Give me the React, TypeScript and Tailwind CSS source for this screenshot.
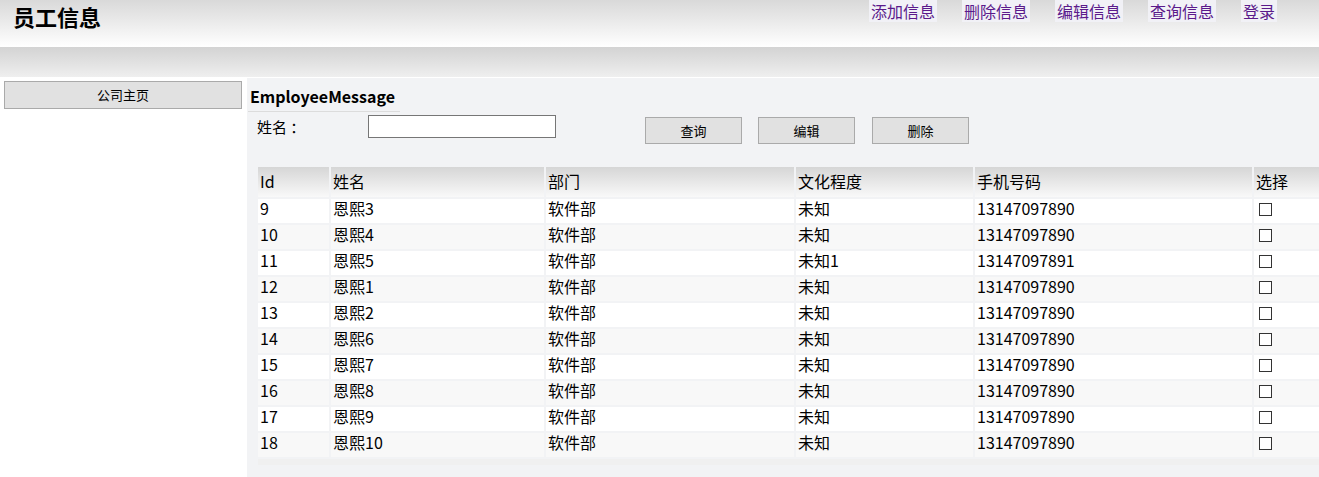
const employees = [
  { id: 9, name: "恩熙3", dept: "软件部", edu: "未知", phone: "13147097890" },
  { id: 10, name: "恩熙4", dept: "软件部", edu: "未知", phone: "13147097890" },
  { id: 11, name: "恩熙5", dept: "软件部", edu: "未知1", phone: "13147097891" },
  { id: 12, name: "恩熙1", dept: "软件部", edu: "未知", phone: "13147097890" },
  { id: 13, name: "恩熙2", dept: "软件部", edu: "未知", phone: "13147097890" },
  { id: 14, name: "恩熙6", dept: "软件部", edu: "未知", phone: "13147097890" },
  { id: 15, name: "恩熙7", dept: "软件部", edu: "未知", phone: "13147097890" },
  { id: 16, name: "恩熙8", dept: "软件部", edu: "未知", phone: "13147097890" },
  { id: 17, name: "恩熙9", dept: "软件部", edu: "未知", phone: "13147097890" },
  { id: 18, name: "恩熙10", dept: "软件部", edu: "未知", phone: "13147097890" },
];

const navLinks = ["添加信息", "删除信息", "编辑信息", "查询信息", "登录"];

const columns = [
  { label: "Id", width: "w-[71px]" },
  { label: "姓名", width: "w-[213px]" },
  { label: "部门", width: "w-[248px]" },
  { label: "文化程度", width: "w-[177px]" },
  { label: "手机号码", width: "w-[277px]" },
  { label: "选择", width: "w-[90px]" },
];

const GrayButton = ({ children, className }: { children: string; className?: string }) => (
  <button
    type="button"
    className={`h-[27px] border border-[#aaaaaa] bg-[#e1e1e1] text-[13px] text-black ${className ?? ""}`}
  >
    {children}
  </button>
);

export default function App() {
  return (
    <div className="h-[477px] w-[1319px] overflow-hidden bg-white font-['Noto_Sans_CJK_SC',sans-serif] text-black">
      {/* top header */}
      <header className="flex h-[47px] items-start justify-between bg-gradient-to-b from-[#d9d9d9] to-[#ffffff]">
        <h1 className="pl-[13px] text-[22px] font-bold leading-[32px]">员工信息</h1>
        <nav className="mr-[42px] flex items-start gap-[25px]">
          {navLinks.map((link) => (
            <a
              key={link}
              href="#"
              className="block h-[22px] overflow-visible bg-[#f1f1f6] px-[2px] text-[16px] leading-[23px] text-[#5b1a8b]"
            >
              {link}
            </a>
          ))}
        </nav>
      </header>
      <div className="h-[30px] bg-gradient-to-b from-[#d3d3d3] to-[#efefef]" />
      <div className="h-px bg-white" />

      <div className="flex h-[399px]">
        {/* sidebar */}
        <aside className="w-[247px] shrink-0 bg-white pl-[4px] pt-[3px]">
          <button
            type="button"
            className="h-[28px] w-[238px] border border-[#aaaaaa] bg-[#e1e1e1] text-[13px] text-black"
          >
            公司主页
          </button>
        </aside>

        {/* main */}
        <main className="min-w-0 flex-1 overflow-hidden bg-[#f2f3f5] pt-[7px]">
          <h3 className="ml-px w-[152px] border-b border-[#dcdcdc] pb-[4px] pl-[2px] text-[16px] font-bold leading-[22px]">
            EmployeeMessage
          </h3>
          <div className="flex items-start pt-[3px]">
            <span className="ml-[10px] w-[111px] text-[15px] leading-[23px]">姓名 ：</span>
            <input
              type="text"
              className="h-[23px] w-[188px] border border-[#767676] bg-white"
            />
            <div className="ml-[89px] mt-[2px] flex gap-[16px]">
              <GrayButton className="w-[97px]">查询</GrayButton>
              <GrayButton className="w-[97px]">编辑</GrayButton>
              <GrayButton className="ml-px w-[97px]">删除</GrayButton>
            </div>
          </div>

          <table className="ml-[9px] mt-[21px] w-[1090px] table-fixed border-separate border-spacing-[2px] text-[16px]">
            <thead>
              <tr>
                {columns.map((col) => (
                  <th
                    key={col.label}
                    className={`${col.width} h-[30px] bg-gradient-to-b from-[#d6d6d6] to-[#f9f9f9] pb-[2px] pl-[2px] text-left font-normal`}
                  >
                    {col.label}
                  </th>
                ))}
              </tr>
            </thead>
            <tbody>
              {employees.map((emp, i) => {
                const bg = i % 2 === 0 ? "bg-white" : "bg-[#f8f8f8]";
                return (
                  <tr key={emp.id} className="h-[24px] leading-[18px]">
                    <td className={`${bg} pb-[6px] pl-[2px]`}>{emp.id}</td>
                    <td className={`${bg} pb-[6px] pl-[2px]`}>{emp.name}</td>
                    <td className={`${bg} pb-[6px] pl-[2px]`}>{emp.dept}</td>
                    <td className={`${bg} pb-[6px] pl-[2px]`}>{emp.edu}</td>
                    <td className={`${bg} pb-[6px] pl-[2px]`}>{emp.phone}</td>
                    <td className={`${bg} pb-[4px] pl-[5px]`}>
                      <span className="block h-[13px] w-[13px] border border-[#333333] bg-white" />
                    </td>
                  </tr>
                );
              })}
              <tr className="h-[6px]">
                <td colSpan={6} className="bg-[#f0f0f0]" />
              </tr>
            </tbody>
          </table>
        </main>
      </div>
    </div>
  );
}
